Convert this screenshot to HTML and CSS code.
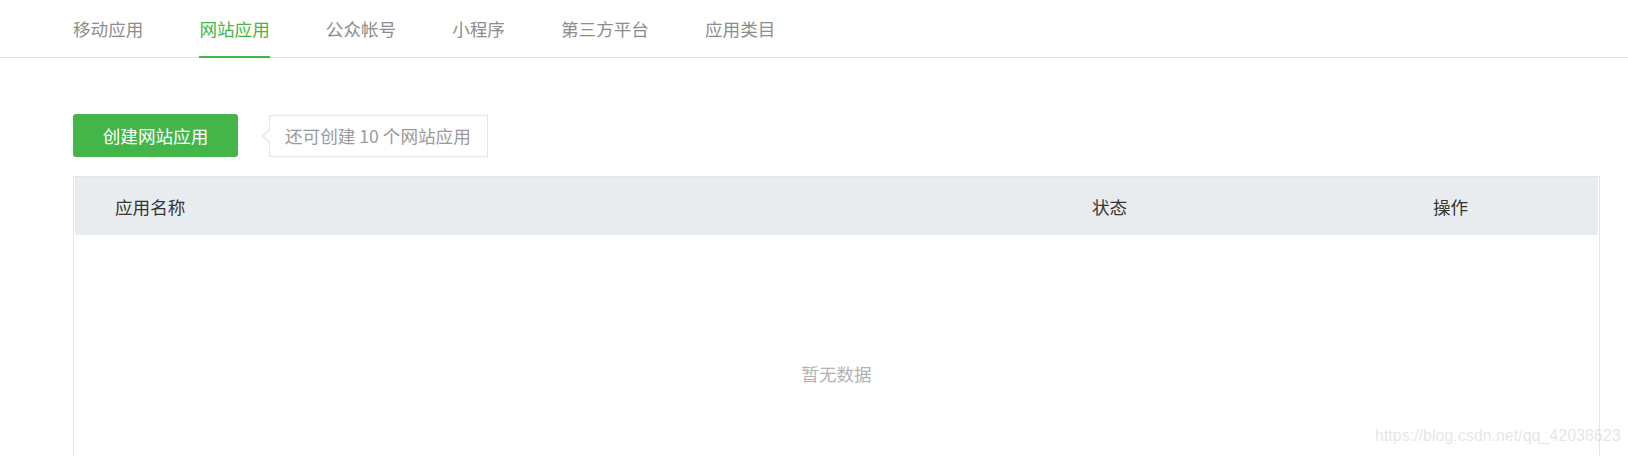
FILE: index.html
```html
<!DOCTYPE html>
<html lang="zh-CN">
<head>
<meta charset="utf-8">
<title>网站应用</title>
<link rel="stylesheet" href="styles.css">
</head>
<body>
<nav class="tabs">
  <a class="tab">移动应用</a>
  <a class="tab active">网站应用</a>
  <a class="tab">公众帐号</a>
  <a class="tab">小程序</a>
  <a class="tab">第三方平台</a>
  <a class="tab">应用类目</a>
</nav>
<main class="content">
  <div class="toolbar">
    <button class="btn-create">创建网站应用</button>
    <div class="tip">还可创建 10 个网站应用</div>
  </div>
  <div class="table">
    <div class="thead">
      <div class="col col-name">应用名称</div>
      <div class="col col-status">状态</div>
      <div class="col col-action">操作</div>
    </div>
    <div class="tbody">
      <div class="empty">暂无数据</div>
    </div>
  </div>
</main>
<div class="watermark">https://blog.csdn.net/qq_42038623</div>
</body>
</html>
```

FILE: styles.css
```css
html, body {
  margin: 0;
  padding: 0;
  background: #fff;
  overflow: hidden;
}
body {
  font-family: "Noto Sans CJK SC", "Noto Sans", "Liberation Sans", sans-serif;
  font-size: 17.6px;
  color: #353535;
  width: 1628px;
  height: 456px;
  position: relative;
}
.tabs {
  display: flex;
  height: 57px;
  padding-left: 73px;
  border-bottom: 1px solid #e4e4e4;
  gap: 56px;
}
.tab {
  position: relative;
  display: block;
  line-height: 57px;
  color: #8d8d8d;
  white-space: nowrap;
  cursor: pointer;
}
.tab.active {
  color: #44b549;
}
.tab.active::after {
  content: "";
  position: absolute;
  left: 0;
  right: 0;
  bottom: -1px;
  height: 2px;
  background: #44b549;
}
.content {
  margin-left: 73px;
  width: 1527px;
}
.toolbar {
  display: flex;
  align-items: center;
  margin-top: 56px;
  height: 43px;
}
.btn-create {
  width: 165px;
  height: 43px;
  border: 0;
  border-radius: 3px;
  background: #44b549;
  color: #fff;
  font-family: inherit;
  font-size: 17.6px;
  padding: 0;
  cursor: pointer;
}
.tip {
  position: relative;
  margin-left: 31px;
  height: 40px;
  line-height: 40px;
  padding: 0 16px 0 15px;
  border: 1px solid #e4e6eb;
  color: #9a9a9a;
  background: #fff;
  white-space: nowrap;
}
.tip::before,
.tip::after {
  content: "";
  position: absolute;
  top: 50%;
  width: 0;
  height: 0;
  border-style: solid;
}
.tip::before {
  left: -8px;
  margin-top: -8px;
  border-width: 8px 8px 8px 0;
  border-color: transparent #e4e6eb transparent transparent;
}
.tip::after {
  left: -6px;
  margin-top: -7px;
  border-width: 7px 7px 7px 0;
  border-color: transparent #fff transparent transparent;
}
.table {
  margin-top: 19px;
  border: 1px solid #e4e6eb;
  border-bottom: 0;
  padding: 0 1px;
  height: 300px;
}
.thead {
  display: grid;
  grid-template-columns: 977px 341px 1fr;
  height: 58px;
  align-items: center;
  padding-left: 40px;
  background: #e8ecef;
  color: #353535;
}
.col {
  white-space: nowrap;
}
.tbody {
  padding-top: 127px;
  text-align: center;
}
.empty {
  line-height: 24px;
  color: #b2b2b2;
}
.watermark {
  position: absolute;
  left: 1375px;
  top: 427px;
  font-family: "Liberation Sans", Arial, sans-serif;
  font-size: 16px;
  color: rgba(180, 180, 180, 0.35);
  white-space: nowrap;
  pointer-events: none;
}
```
